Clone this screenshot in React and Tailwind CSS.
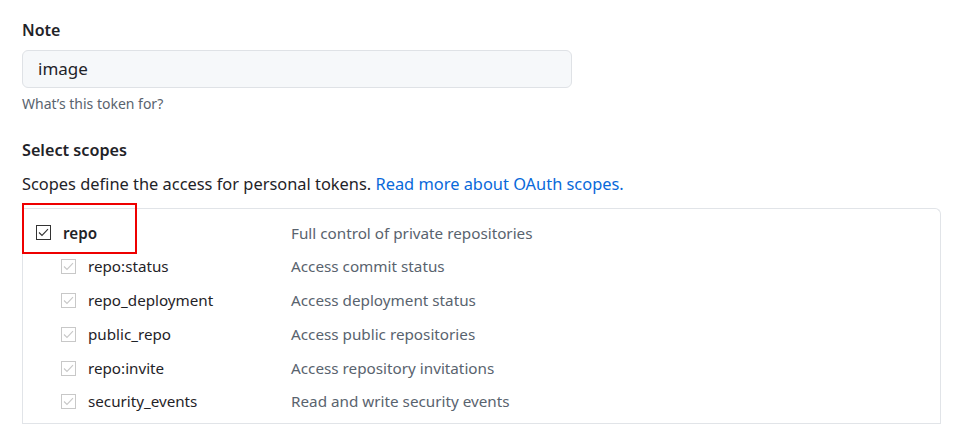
import React from "react";

function Check({ disabled }) {
  return (
    <span
      className={
        "flex h-[15px] w-[15px] items-center justify-center border " +
        (disabled ? "border-[#c8c8c8] bg-white" : "border-[#333] bg-white")
      }
    >
      <svg width="11" height="9" viewBox="0 0 11 9" fill="none">
        <path
          d="M1 4.5 L4 7.5 L10 1.2"
          stroke={disabled ? "#c8c8c8" : "#333"}
          strokeWidth="1.1"
        />
      </svg>
    </span>
  );
}

const subs = [
  ["repo:status", "Access commit status"],
  ["repo_deployment", "Access deployment status"],
  ["public_repo", "Access public repositories"],
  ["repo:invite", "Access repository invitations"],
  ["security_events", "Read and write security events"],
];

export default function App() {
  return (
    <div
      className="h-[427px] w-[953px] overflow-hidden bg-white px-[22px] pt-[19px] text-[#1f2328]"
      style={{ fontFamily: '"Noto Sans", "Open Sans", sans-serif' }}
    >
      <div className="text-[16px] font-semibold leading-[22px]">Note</div>
      <div className="mt-[9px] flex h-[38px] w-[550px] items-center rounded-[6px] border border-[#dfe2e6] bg-[#f6f8fa] px-[15px] text-[17px]">
        image
      </div>
      <div className="mt-[7px] text-[14px] leading-[18px] text-[#59636e]">
        What’s this token for?
      </div>
      <div className="mt-[26px] text-[16.2px] font-semibold leading-[22px]">Select scopes</div>
      <div className="mt-[12px] text-[16.4px] leading-[22px]">
        Scopes define the access for personal tokens.{" "}
        <span className="text-[#0969da]">Read more about OAuth scopes.</span>
      </div>
      <div className="relative mt-[13px] w-[919px] rounded-tr-[6px] border-r border-t border-l border-[#e1e4e8] pb-[5px]">
        <div className="flex h-[41px] items-center pt-[7px]">
          <div className="flex w-[268px] items-center pl-[13px]">
            <Check />
            <span className="ml-[12px] text-[15.2px] font-semibold">repo</span>
          </div>
          <span className="text-[15.25px] text-[#59636e]">Full control of private repositories</span>
        </div>
        {subs.map(([n, d]) => (
          <div key={n} className="flex h-[33.75px] items-center">
            <div className="flex w-[268px] items-center pl-[38px]">
              <Check disabled />
              <span className="ml-[12px] text-[15.2px]">{n}</span>
            </div>
            <span className="text-[15.25px] text-[#59636e]">{d}</span>
          </div>
        ))}
        <div className="absolute bottom-0 left-0 right-0 h-px bg-[#e1e4e8]" />
        <div className="pointer-events-none absolute left-[-1px] top-[-6px] h-[51px] w-[115px] border-2 border-[#ee0000]" />
      </div>
    </div>
  );
}
